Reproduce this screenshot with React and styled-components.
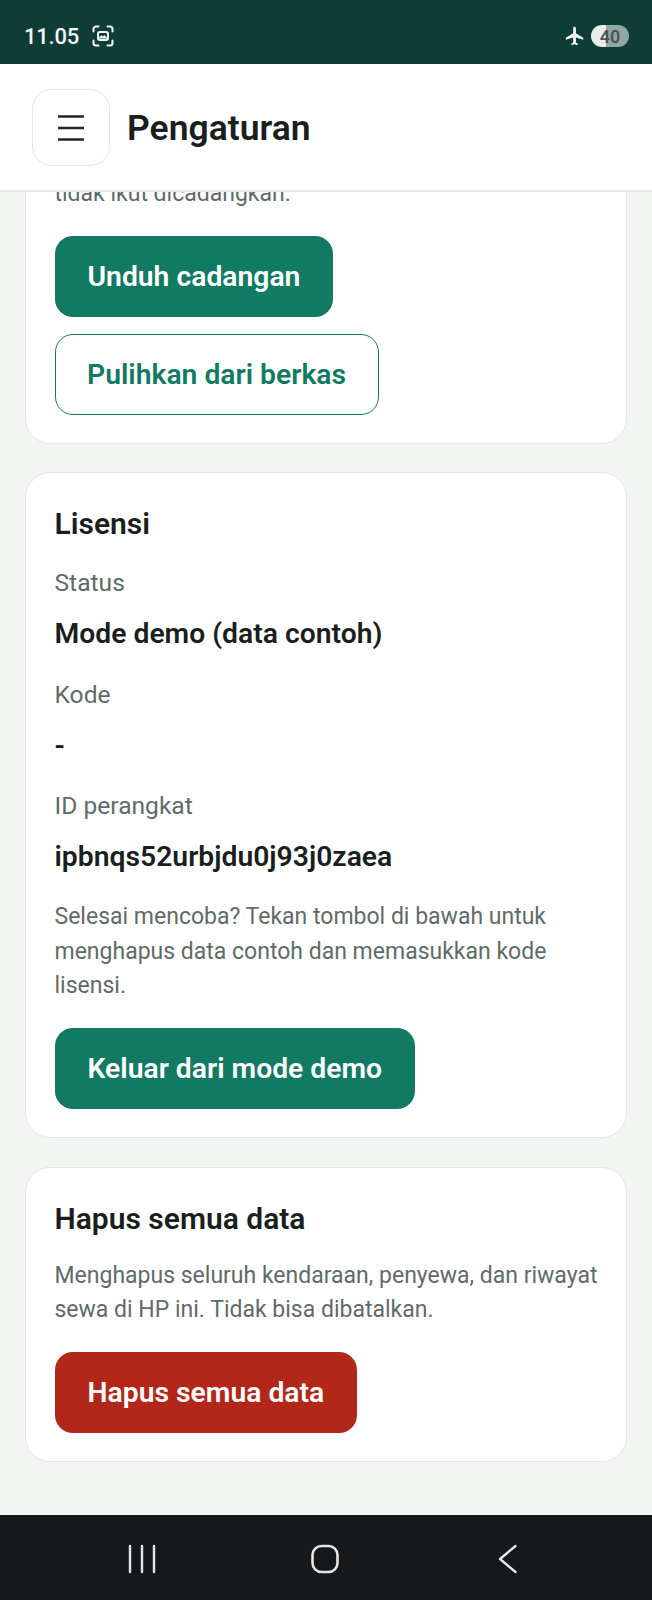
import styled, { createGlobalStyle } from "styled-components";

const GlobalStyle = createGlobalStyle`
  html, body {
    margin: 0;
    padding: 0;
    background: #f3f5f3;
    font-family: Roboto, "Noto Sans", sans-serif;
  }
  * { box-sizing: border-box; }
`;

const Screen = styled.div`
  width: 652px;
  height: 1600px;
  display: flex;
  flex-direction: column;
  overflow: hidden;
`;

const StatusBar = styled.div`
  height: 64px;
  flex-shrink: 0;
  background: #103c36;
  color: #f2f6f5;
  padding: 8px 23px 0 24px;
  display: flex;
  align-items: center;
  justify-content: space-between;
`;

const StatusGroup = styled.div`
  display: flex;
  align-items: center;
  gap: ${(props) => props.gap}px;
`;

const Time = styled.span`
  font-size: 22px;
  font-weight: 500;
  letter-spacing: -0.2px;
`;

const Battery = styled.div`
  width: 38px;
  height: 22px;
  border-radius: 11px;
  display: flex;
  align-items: center;
  justify-content: center;
  color: #4a5452;
  font-size: 18px;
  font-weight: 600;
  background: linear-gradient(
    90deg,
    #e6ecea ${(props) => props.level}%,
    #93a8a3 ${(props) => props.level}%
  );
`;

const Header = styled.header`
  height: 128px;
  flex-shrink: 0;
  background: #fff;
  border-bottom: 2px solid #e4e7e5;
  padding: 1px 32px 0;
  display: flex;
  align-items: center;
  gap: 17px;
  position: relative;
  z-index: 1;
`;

const MenuButton = styled.button`
  width: 78px;
  height: 77px;
  background: #fff;
  border: 1.5px solid #e3e6e4;
  border-radius: 20px;
  padding: 0;
  display: flex;
  align-items: center;
  justify-content: center;
`;

const PageTitle = styled.h1`
  margin: 0;
  color: #1a1f1e;
  font-size: 35.5px;
  font-weight: 600;
`;

const Main = styled.main`
  flex: 1;
  min-height: 0;
  overflow: hidden;
  padding: 0 25px 53px;
  display: flex;
  flex-direction: column;
  justify-content: flex-end;
  gap: 28.5px;
`;

const Card = styled.section`
  flex-shrink: 0;
  background: #fff;
  border: 1.5px solid #e3e6e4;
  border-radius: 25px;
  padding: 28px 28px 28px 28.5px;
  display: flex;
  flex-direction: column;
  align-items: flex-start;
`;

const CardTitle = styled.h2`
  margin: 0 0 ${(props) => props.$after}px;
  color: #1a1f1e;
  font-size: 30px;
  line-height: 45px;
  font-weight: 600;
`;

const Label = styled.div`
  color: #5f6b68;
  font-size: 24.6px;
  line-height: 36px;
  margin-bottom: 12px;
`;

const Value = styled.div`
  color: #1a1f1e;
  font-size: 28.3px;
  line-height: 41px;
  font-weight: 600;
  margin-bottom: 22.5px;
`;

const Note = styled.p`
  margin: 0 0 24px;
  color: #5f6b68;
  font-size: 23px;
  line-height: 34.7px;
`;

const Button = styled.button`
  height: 81px;
  padding: 0 ${(props) => (props.$outline ? 31.5 : 33)}px;
  border-radius: 18px;
  border: ${(props) => (props.$outline ? "1.5px solid #127a63" : "none")};
  background: ${(props) => (props.$outline ? "#fff" : props.$color)};
  color: ${(props) => (props.$outline ? "#127a63" : "#fff")};
  font-family: inherit;
  font-size: 28.3px;
  font-weight: 600;
  white-space: nowrap;
  & + & {
    margin-top: 17px;
  }
`;

const NavBar = styled.nav`
  height: 85px;
  flex-shrink: 0;
  background: #17181a;
  display: grid;
  grid-template-columns: repeat(3, 183px);
  padding: 3px 0 0 50px;
  align-items: center;
  justify-items: center;
`;

const stroke = { fill: "none", stroke: "#e6e6e6", strokeLinecap: "round" };

function ScreenshotIcon() {
  return (
    <svg width="22" height="22" viewBox="0 0 22 22" fill="none" stroke="#f2f6f5" strokeWidth="2" strokeLinecap="round">
      <path d="M1.5 6.5V4a2.5 2.5 0 0 1 2.5-2.5h2.5M15.5 1.5H18A2.5 2.5 0 0 1 20.5 4v2.5M20.5 15.5V18a2.5 2.5 0 0 1-2.5 2.5h-2.5M6.5 20.5H4A2.5 2.5 0 0 1 1.5 18v-2.5" />
      <rect x="6" y="7" width="10" height="8" rx="2" />
      <path d="M7 12.5l2.2-2.2 1.6 1.2 1.4-1.6 2.8 2.6v1H7z" fill="#f2f6f5" stroke="none" />
    </svg>
  );
}

function PlaneIcon() {
  return (
    <svg width="22" height="22" viewBox="0 0 24 24" fill="#f2f6f5">
      <path d="M21 16v-2l-8-5V3.5C13 2.67 12.33 2 11.5 2S10 2.67 10 3.5V9l-8 5v2l8-2.5V19l-2 1.5V22l3.5-1 3.5 1v-1.5L13 19v-5.5z" />
    </svg>
  );
}

function MenuIcon() {
  return (
    <svg width="26" height="26" viewBox="0 0 26 26" stroke="#1f2624" strokeWidth="2.7">
      <path d="M0 1.5h26M0 13h26M0 24.5h26" />
    </svg>
  );
}

function RecentsIcon() {
  return (
    <svg width="28" height="30" viewBox="0 0 28 30" {...stroke} strokeWidth="2.4">
      <path d="M2 2v26M14 2v26M26 2v26" />
    </svg>
  );
}

function HomeIcon() {
  return (
    <svg width="30" height="30" viewBox="0 0 30 30" {...stroke} strokeWidth="2.6">
      <rect x="2.5" y="2" width="25" height="26" rx="9" />
    </svg>
  );
}

function BackIcon() {
  return (
    <svg width="20" height="30" viewBox="0 0 20 30" {...stroke} strokeWidth="2.4">
      <path d="M17.5 2L2 15l15.5 13" strokeLinejoin="round" />
    </svg>
  );
}

export default function App() {
  return (
    <>
      <GlobalStyle />
      <Screen>
        <StatusBar>
          <StatusGroup gap={13}>
            <Time>11.05</Time>
            <ScreenshotIcon />
          </StatusGroup>
          <StatusGroup gap={5}>
            <PlaneIcon />
            <Battery level={40}>40</Battery>
          </StatusGroup>
        </StatusBar>

        <Header>
          <MenuButton aria-label="Menu">
            <MenuIcon />
          </MenuButton>
          <PageTitle>Pengaturan</PageTitle>
        </Header>

        <Main>
          <Card>
            <Note>tidak ikut dicadangkan.</Note>
            <Button $color="#127a63">Unduh cadangan</Button>
            <Button $outline>Pulihkan dari berkas</Button>
          </Card>

          <Card>
            <CardTitle $after={19}>Lisensi</CardTitle>
            <Label>Status</Label>
            <Value>Mode demo (data contoh)</Value>
            <Label>Kode</Label>
            <Value>-</Value>
            <Label>ID perangkat</Label>
            <Value>ipbnqs52urbjdu0j93j0zaea</Value>
            <Note>
              Selesai mencoba? Tekan tombol di bawah untuk menghapus data contoh dan memasukkan kode lisensi.
            </Note>
            <Button $color="#127a63">Keluar dari mode demo</Button>
          </Card>

          <Card>
            <CardTitle $after={18}>Hapus semua data</CardTitle>
            <Note>
              Menghapus seluruh kendaraan, penyewa, dan riwayat sewa di HP ini. Tidak bisa dibatalkan.
            </Note>
            <Button $color="#b3261a">Hapus semua data</Button>
          </Card>
        </Main>

        <NavBar>
          <RecentsIcon />
          <HomeIcon />
          <BackIcon />
        </NavBar>
      </Screen>
    </>
  );
}
